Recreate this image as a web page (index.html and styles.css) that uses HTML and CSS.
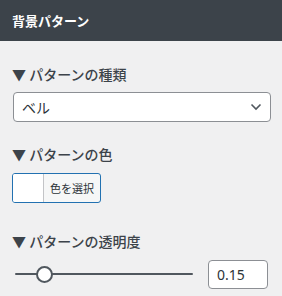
FILE: index.html
```html
<!DOCTYPE html>
<html lang="ja">
<head>
    <meta charset="UTF-8">
    <meta name="viewport" content="width=device-width, initial-scale=1.0">
    <title>背景パターン</title>
    <link rel="stylesheet" href="styles.css">
</head>
<body>
    <div class="panel-header">
        <h2 class="panel-title">背景パターン</h2>
    </div>

    <div class="panel-body">
        <div class="field">
            <h3 class="field-label">▼ パターンの種類</h3>
            <div class="select-wrap">
                <select class="select">
                    <option>ベル</option>
                </select>
                <svg class="select-arrow" width="12" height="8" viewBox="0 0 12 8" aria-hidden="true">
                    <path d="M1.5 1.5 L6 6 L10.5 1.5" fill="none" stroke="#50575e" stroke-width="1.6"/>
                </svg>
            </div>
        </div>

        <div class="field field-color">
            <h3 class="field-label">▼ パターンの色</h3>
            <button type="button" class="color-result">
                <span class="color-swatch"></span>
                <span class="color-text">色を選択</span>
            </button>
        </div>

        <div class="field field-opacity">
            <h3 class="field-label">▼ パターンの透明度</h3>
            <div class="range-row">
                <input type="range" class="range" min="0" max="1" step="0.01" value="0.13">
                <input type="text" class="number" value="0.15">
            </div>
        </div>
    </div>
</body>
</html>
```

FILE: styles.css
```css
/* Global */
body {
    margin: 0;
    background-color: #f0f0f1;
    color: #3c434a;
    font-family: "Noto Sans", "Noto Sans CJK JP", sans-serif;
}

/* Header */
.panel-header {
    height: 41px;
    background-color: #3c434a;
    display: flex;
    align-items: center;
    padding: 0 12px;
}

.panel-title {
    margin: 0;
    font-family: "Noto Sans CJK JP", sans-serif;
    font-size: 13px;
    font-weight: 700;
    color: #ffffff;
    line-height: 20px;
}

/* Body */
.panel-body {
    padding: 23px 12px 0;
}

.field + .field {
    margin-top: 22px;
}

.field-opacity {
    margin-top: 28px !important;
}

.field-label {
    margin: 0 0 8px;
    font-family: "Noto Sans CJK JP", sans-serif;
    font-size: 14px;
    font-weight: 500;
    line-height: 20px;
    color: #3c434a;
}

/* Select */
.select-wrap {
    position: relative;
    margin-left: 1px;
    width: 258px;
}

.select {
    -webkit-appearance: none;
    appearance: none;
    width: 100%;
    height: 30px;
    padding: 0 24px 0 8px;
    border: 1px solid #8c8f94;
    border-radius: 4px;
    background-color: #ffffff;
    color: #2c3338;
    font-family: "Noto Sans CJK JP", sans-serif;
    font-size: 14px;
    box-sizing: border-box;
}

.select-arrow {
    position: absolute;
    right: 9px;
    top: 11px;
    pointer-events: none;
}

/* Color picker button */
.color-result {
    display: flex;
    align-items: stretch;
    height: 30px;
    width: 89px;
    margin-top: 9px;
    padding: 0;
    border: 1px solid #2271b1;
    border-radius: 3px;
    background-color: #f6f7f7;
    overflow: hidden;
    cursor: pointer;
    box-sizing: border-box;
}

.color-swatch {
    width: 30px;
    background-color: #ffffff;
    border-right: 1px solid #c3c4c7;
}

.color-text {
    flex: 1;
    display: flex;
    align-items: center;
    padding-left: 6px;
    font-family: "Noto Sans CJK JP", sans-serif;
    font-size: 11px;
    color: #2c3338;
}

/* Opacity row */
.range-row {
    display: flex;
    align-items: center;
    gap: 15px;
    height: 30px;
    padding: 0 2px 0 3px;
}

.range {
    -webkit-appearance: none;
    appearance: none;
    flex: 1;
    min-width: 0;
    margin: 0;
    height: 18px;
    background: transparent;
}

.range::-webkit-slider-runnable-track {
    height: 2px;
    background-color: #50575e;
    border-radius: 1px;
}

.range::-webkit-slider-thumb {
    -webkit-appearance: none;
    width: 17px;
    height: 17px;
    margin-top: -7.5px;
    border: 2px solid #50575e;
    border-radius: 50%;
    background-color: #ffffff;
    box-sizing: border-box;
}

.number {
    width: 60px;
    height: 29px;
    padding: 0 8px;
    border: 1px solid #8c8f94;
    border-radius: 4px;
    background-color: #ffffff;
    color: #2c3338;
    font-family: "Noto Sans", sans-serif;
    font-size: 14px;
    box-sizing: border-box;
}
```
